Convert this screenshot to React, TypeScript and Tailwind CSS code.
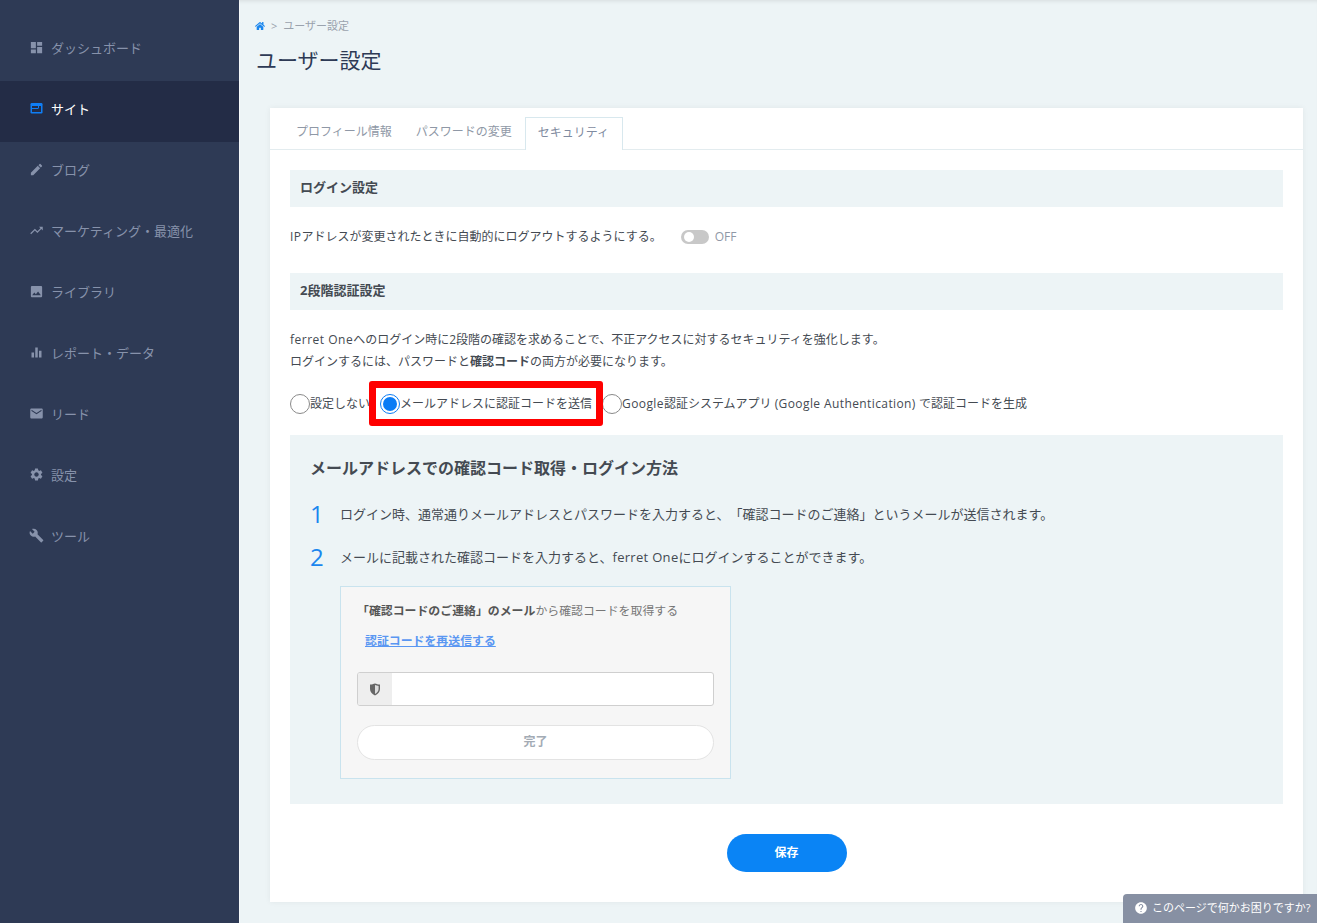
import { FaHome } from 'react-icons/fa'
import {
  MdBuild,
  MdDashboard,
  MdEdit,
  MdEmail,
  MdEqualizer,
  MdHelp,
  MdImage,
  MdSettings,
  MdTrendingUp,
} from 'react-icons/md'

function SiteIcon({ className }: { className?: string }) {
  return (
    <svg viewBox="0 0 15 15" className={className}>
      <rect x="1.5" y="2" width="12" height="10.5" rx="1.2" fill="#0f7ef5" />
      <rect x="3" y="5" width="9" height="6" fill="#232c46" />
      <rect x="9" y="5" width="1" height="2.5" fill="#0f7ef5" />
      <rect x="3" y="7" width="6" height="1" fill="#0f7ef5" />
    </svg>
  )
}

const navItems = [
  { name: 'ダッシュボード', icon: MdDashboard },
  { name: 'サイト', icon: SiteIcon, active: true },
  { name: 'ブログ', icon: MdEdit },
  { name: 'マーケティング・最適化', icon: MdTrendingUp },
  { name: 'ライブラリ', icon: MdImage },
  { name: 'レポート・データ', icon: MdEqualizer },
  { name: 'リード', icon: MdEmail },
  { name: '設定', icon: MdSettings },
  { name: 'ツール', icon: MdBuild },
]

function SectionHeading({ children }: { children: string }) {
  return (
    <div className="h-[37px] flex items-center px-[10px] pb-[2px] bg-[#edf4f6] text-[13px] font-bold text-[#444a52]">
      {children}
    </div>
  )
}

function Radio({ label, checked }: { label: React.ReactNode; checked?: boolean }) {
  return (
    <label className="flex items-center">
      <span
        className={
          checked
            ? 'w-5 h-5 rounded-full border border-[#0a7cf5] bg-white flex items-center justify-center shrink-0'
            : 'w-5 h-5 rounded-full border border-[#8a8a8a] bg-white shrink-0'
        }
      >
        {checked && <span className="w-[14px] h-[14px] rounded-full bg-[#0a7cf5]" />}
      </span>
      <span className="whitespace-nowrap">{label}</span>
    </label>
  )
}

function Step({ num, children }: { num: string; children: React.ReactNode }) {
  return (
    <div className="flex items-center h-[32px]">
      <span className="w-[30px] text-[24px] leading-none text-[#1a86ee]">{num}</span>
      <span className="pt-[1px] text-[13px] text-[#444a52]">{children}</span>
    </div>
  )
}

export default function App() {
  return (
    <div
      className="relative flex h-[923px] overflow-hidden bg-[#edf4f6] text-[12px] text-[#444a52] [text-spacing-trim:space-all]"
      style={{ fontFamily: '"Open Sans", "Noto Sans CJK JP", sans-serif' }}
    >
      <aside className="w-[239px] shrink-0 bg-[#2e3a55] pt-[20px]">
        {navItems.map((item) => (
          <div
            key={item.name}
            className={
              item.active
                ? 'h-[61px] flex items-center pl-[29px] pb-[3px] bg-[#232c46] text-white'
                : 'h-[61px] flex items-center pl-[29px] pb-[3px] text-[#8792ab]'
            }
          >
            <item.icon className="w-[15px] h-[15px] mb-[4px]" />
            <span className="ml-[7px] text-[13px]">{item.name}</span>
          </div>
        ))}
      </aside>

      <main className="flex-1 min-w-0 pt-[19px] shadow-[inset_0_4px_4px_-3px_rgba(0,0,0,0.1),inset_1px_0_0_#f7fafb]">
        <div className="flex items-center pl-[16px] h-[14px] text-[11px] text-[#9aa2ad]">
          <FaHome className="w-[10px] h-[10px] text-[#1a86ee]" />
          <span className="ml-[6px]">&gt;</span>
          <span className="ml-[6px]">ユーザー設定</span>
        </div>
        <h1 className="pl-[17px] mt-[12px] text-[21px] leading-[30px] font-normal text-[#2e3a55]">ユーザー設定</h1>

        <section className="mt-[33px] ml-[31px] mr-[14px] h-[794px] bg-white shadow-[0_0_6px_rgba(0,0,0,0.06)]">
          <div className="h-[42px] flex items-end pl-[15px] border-b border-[#e3ecef] text-[12px] text-[#8f98a6]">
            <div className="h-[31px] pl-[11px] pr-[12px] pb-[4px] flex items-center">プロフィール情報</div>
            <div className="h-[31px] pl-[12px] pr-[13px] pb-[4px] flex items-center">パスワードの変更</div>
            <div className="h-[33px] -mb-px pl-[12px] pr-[13px] pb-[2px] flex items-center bg-white border border-b-0 border-[#d8e8ee] text-[#7f8ba0]">
              セキュリティ
            </div>
          </div>

          <div className="pt-[20px] px-[20px]">
            <SectionHeading>ログイン設定</SectionHeading>
            <div className="h-[66px] flex items-center pb-[6px]">
              <span>
                <span className="tracking-[0.5px]">IP</span>アドレスが変更されたときに自動的にログアウトするようにする。
              </span>
              <span className="ml-[19px] w-[28px] h-[14px] rounded-full bg-[#c8c8c8] flex items-center pl-[3px]">
                <span className="w-[10px] h-[10px] rounded-full bg-white" />
              </span>
              <span className="ml-[6px] text-[#8f98a6]">OFF</span>
            </div>

            <SectionHeading>2段階認証設定</SectionHeading>
            <div className="mt-[19px] leading-[22px]">
              <p>
                <span className="tracking-[0.5px]">ferret One</span>へのログイン時に2段階の確認を求めることで、不正アクセスに対するセキュリティを強化します。
              </p>
              <p>
                ログインするには、パスワードと<b>確認コード</b>の両方が必要になります。
              </p>
            </div>

            <div className="relative mt-[19px] h-[24px] flex items-center gap-[10px]">
              <Radio label="設定しない" />
              <Radio label="メールアドレスに認証コードを送信" checked />
              <Radio
                label={
                  <>
                    <span className="tracking-[0.4px]">Google</span>認証システムアプリ{' '}
                    <span className="tracking-[0.4px]">(Google Authentication)</span> で認証コードを生成
                  </>
                }
              />
              <div className="absolute left-[79px] top-[-11px] w-[234px] h-[45px] border-[7px] border-[#ff0000] rounded-[3px]" />
            </div>

            <div className="mt-[19px] h-[369px] bg-[#edf4f6] pt-[20px] pl-[20px]">
              <h2 className="text-[16px] leading-[26px] font-bold text-[#444a52]">
                メールアドレスでの確認コード取得・ログイン方法
              </h2>
              <div className="mt-[17px]">
                <Step num="1">ログイン時、通常通りメールアドレスとパスワードを入力すると、「確認コードのご連絡」というメールが送信されます。</Step>
              </div>
              <div className="mt-[11px]">
                <Step num="2">
                  メールに記載された確認コードを入力すると、<span className="tracking-[0.3px]">ferret One</span>にログインすることができます。
                </Step>
              </div>

              <div className="mt-[13px] ml-[30px] w-[391px] h-[193px] border border-[#c9e3ee] bg-[#f6f6f6] px-[16px]">
                <p className="mt-[15px] text-[11.9px] leading-[16px] text-[#777]">
                  <b className="text-[#555]">「確認コードのご連絡」のメール</b>から確認コードを取得する
                </p>
                <a className="block mt-[14px] pl-[8px] text-[11.9px] leading-[16px] font-bold text-[#5a97f2] underline">
                  認証コードを再送信する
                </a>
                <div className="mt-[24px] h-[34px] flex rounded-[3px] border border-[#cfcfcf] overflow-hidden bg-white">
                  <div className="w-[34px] bg-[#eeeeee] flex items-center justify-center">
                    <svg viewBox="0 0 12 13" className="w-[12px] h-[13px]">
                      <path d="M1 1.5 C3 1.5 4.5 1 6 .5 C7.5 1 9 1.5 11 1.5 V6 C11 9 9 11 6 12.5 C3 11 1 9 1 6 Z" fill="#666" />
                      <path d="M6 2 C7.2 2.4 8.4 2.8 9.6 2.9 V6 C9.6 8.2 8.2 9.8 6 11 Z" fill="#ddd" />
                    </svg>
                  </div>
                </div>
                <div className="mt-[19px] h-[35px] pb-[2px] rounded-full border border-[#e3e3e3] bg-white flex items-center justify-center text-[12px] font-bold text-[#a3abb5]">
                  完了
                </div>
              </div>
            </div>

            <div className="mt-[30px] flex justify-center">
              <button className="w-[120px] h-[38px] rounded-full bg-[#0a84f5] text-white text-[12px] font-bold">保存</button>
            </div>
          </div>
        </section>
      </main>

      <div className="absolute right-0 bottom-0 w-[194px] h-[29px] rounded-tl-[4px] bg-[#8790a3] text-white text-[11px] flex items-center pl-[11px] pb-[1px]">
        <MdHelp className="w-[14px] h-[14px]" />
        <span className="ml-[4px] whitespace-nowrap">このページで何かお困りですか?</span>
      </div>
    </div>
  )
}
